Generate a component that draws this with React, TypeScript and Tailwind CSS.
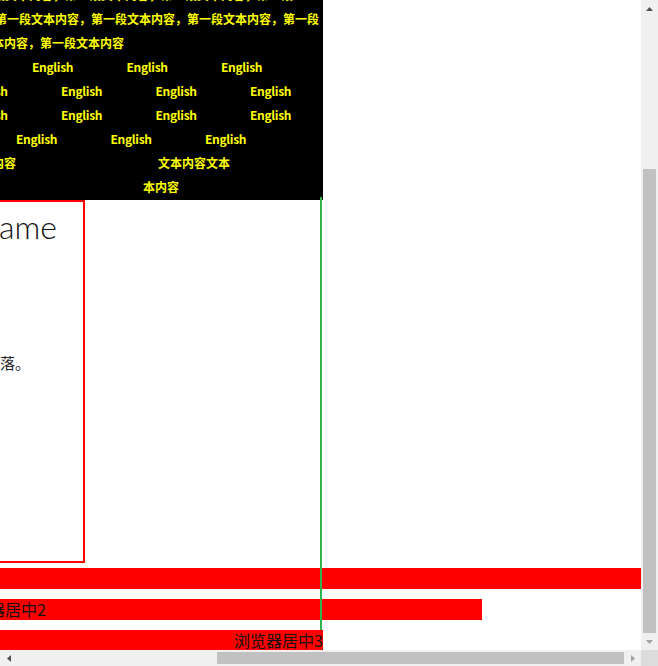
import React from "react";

const cjk = { fontFamily: '"Noto Sans CJK SC", "Noto Sans", sans-serif' };

function EnglishRow({ offset, count }: { offset: string; count: number }) {
  return (
    <div className={`flex h-[24px] whitespace-nowrap ${offset}`}>
      {Array.from({ length: count }).map((_, i) => (
        <span key={i} className="w-[94.5px] shrink-0 tracking-[-0.3px]">
          English
        </span>
      ))}
    </div>
  );
}

export default function App() {
  return (
    <div className="w-[658px] h-[666px] flex flex-col overflow-hidden bg-white">
      <div className="flex h-[650px]">
        <main className="relative w-[641px] h-[650px] overflow-hidden">
          {/* black text panel */}
          <div
            className="w-[323px] h-[200px] bg-black overflow-hidden text-[#ffff00] font-bold text-[12px] leading-[24px]"
            style={cjk}
          >
            <div className="mt-[-17px]">
              <div className="h-[24px] whitespace-nowrap ml-[-31px]">
                第一段文本内容，第一段文本内容，第一段文本内容，第一段
              </div>
              <div className="h-[24px] whitespace-nowrap ml-[-5px]">
                第一段文本内容，第一段文本内容，第一段文本内容，第一段
              </div>
              <div className="h-[24px] whitespace-nowrap ml-[-8px]">本内容，第一段文本内容</div>
              <EnglishRow offset="ml-[32px]" count={3} />
              <EnglishRow offset="ml-[-33.5px]" count={4} />
              <EnglishRow offset="ml-[-33.5px]" count={4} />
              <EnglishRow offset="ml-[16px]" count={3} />
              <div className="flex h-[24px] whitespace-nowrap">
                <span className="ml-[-8px] w-[166px] shrink-0">内容</span>
                <span>文本内容文本</span>
              </div>
              <div className="h-[24px] whitespace-nowrap ml-[143px]">本内容</div>
            </div>
          </div>

          {/* red framed box */}
          <div className="ml-[-2px] w-[87px] h-[363px] border-2 border-[#ff0000] overflow-hidden">
            <div
              className="mt-[7px] ml-[-1px] text-[32px] leading-[36px] font-light text-[#111] whitespace-nowrap"
              style={{ fontFamily: 'Lato, "Open Sans", sans-serif' }}
            >
              ame
            </div>
            <div
              className="mt-[108px] ml-[0px] text-[15px] leading-[20px] text-[#222] whitespace-nowrap"
              style={cjk}
            >
              落。
            </div>
          </div>

          {/* red bars */}
          <div className="text-[16px] leading-[21px] text-[#111]" style={cjk}>
            <div className="mt-[5px] h-[21px] w-full bg-[#ff0000]" />
            <div className="mt-[10px] h-[21px] w-[482px] bg-[#ff0000] whitespace-nowrap">
              <span className="ml-[-43px] inline-block">浏览器居中2</span>
            </div>
            <div className="mt-[10px] h-[21px] w-[323px] bg-[#ff0000] text-right whitespace-nowrap">
              浏览器居中3
            </div>
          </div>

          {/* green guide line */}
          <div className="absolute left-[320px] top-[197px] w-[2px] h-[433px] bg-[#2fb34f]" />
        </main>

        {/* vertical scrollbar */}
        <div className="w-[17px] h-[650px] bg-[#f0f0f0] flex flex-col">
          <div className="h-[17px] flex items-center justify-center">
            <svg width="7" height="4" viewBox="0 0 7 4">
              <polygon points="3.5,0 7,4 0,4" fill="#505050" />
            </svg>
          </div>
          <div className="flex-1 flex flex-col justify-end px-[2px]">
            <div className="h-[464px] bg-[#c1c1c1]" />
          </div>
          <div className="h-[17px] flex items-center justify-center">
            <svg width="7" height="4" viewBox="0 0 7 4">
              <polygon points="0,0 7,0 3.5,4" fill="#a3a3a3" />
            </svg>
          </div>
        </div>
      </div>

      {/* horizontal scrollbar */}
      <div className="flex h-[16px]">
        <div className="w-[641px] h-[16px] bg-[#f0f0f0] flex items-center">
          <div className="w-[17px] h-full flex items-center justify-center">
            <svg width="4" height="7" viewBox="0 0 4 7">
              <polygon points="0,3.5 4,0 4,7" fill="#505050" />
            </svg>
          </div>
          <div className="flex-1 h-full flex items-center">
            <div className="ml-[200px] w-[407px] h-[12px] bg-[#c1c1c1]" />
          </div>
          <div className="w-[17px] h-full flex items-center justify-center">
            <svg width="4" height="7" viewBox="0 0 4 7">
              <polygon points="0,0 4,3.5 0,7" fill="#a3a3a3" />
            </svg>
          </div>
        </div>
        <div className="w-[17px] h-[16px] bg-[#dcdcdc]" />
      </div>
    </div>
  );
}
